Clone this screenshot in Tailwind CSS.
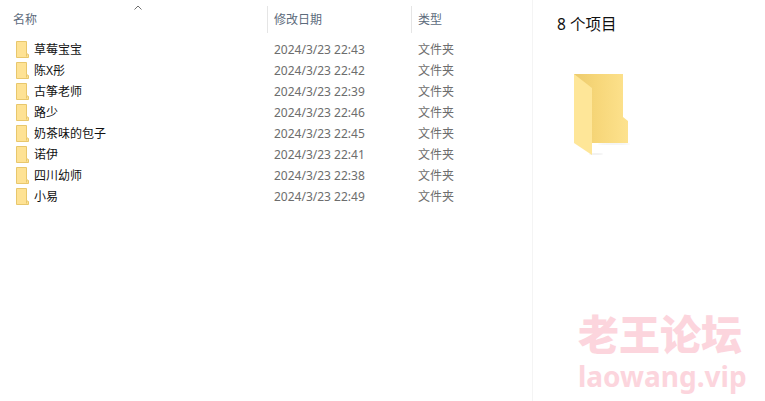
<!DOCTYPE html>
<html lang="zh-CN">
<head>
<meta charset="UTF-8">
<title>8 个项目</title>
<script src="https://cdn.jsdelivr.net/npm/@tailwindcss/browser@4"></script>
</head>
<body class="bg-white w-[765px] h-[401px] overflow-hidden relative flex font-['Noto_Sans','Noto_Sans_CJK_SC',sans-serif] text-[12px]">
<svg width="0" height="0" class="absolute">
  <defs>
    <symbol id="small-folder" viewBox="0 0 13 17">
      <path d="M0.5 0.5H10.5V12.5L12.5 13.5V16.5H0.5Z" fill="#fee294" stroke="#e8c76c" stroke-width="1"/>
      <path d="M10.5 12.5V15.5" stroke="#e8c76c" fill="none"/>
    </symbol>
  </defs>
</svg>
<main class="w-[533px] shrink-0 border-r border-[#f4f4f4] h-full">
  <div class="relative grid grid-cols-[267px_144px_120px] h-[34px] pt-[6px] text-[#5d6b7c]">
    <div class="flex items-center pl-[13px] h-[27px]">名称</div>
    <div class="flex items-center pl-[6px] h-[27px] border-l border-[#e5e5e5]">修改日期</div>
    <div class="flex items-center pl-[6px] h-[27px] border-l border-[#e5e5e5]">类型</div>
    <svg class="absolute left-[134px] top-[5px]" width="8" height="5" viewBox="0 0 8 5"><path d="M0.5 4.5L4 1L7.5 4.5" fill="none" stroke="#6f6f6f"/></svg>
  </div>
  <ul class="mt-[5px]">
    <li class="grid grid-cols-[267px_144px_120px] h-[21px] items-center"><div class="flex items-center gap-[5px] pl-[16px] text-[#111]"><svg class="w-[13px] h-[17px]"><use href="#small-folder"/></svg>草莓宝宝</div><div class="pl-[7px] text-[#6d6d6d]">2024/3/23 22:43</div><div class="pl-[7px] text-[#6d6d6d]">文件夹</div></li>
    <li class="grid grid-cols-[267px_144px_120px] h-[21px] items-center"><div class="flex items-center gap-[5px] pl-[16px] text-[#111]"><svg class="w-[13px] h-[17px]"><use href="#small-folder"/></svg>陈X彤</div><div class="pl-[7px] text-[#6d6d6d]">2024/3/23 22:42</div><div class="pl-[7px] text-[#6d6d6d]">文件夹</div></li>
    <li class="grid grid-cols-[267px_144px_120px] h-[21px] items-center"><div class="flex items-center gap-[5px] pl-[16px] text-[#111]"><svg class="w-[13px] h-[17px]"><use href="#small-folder"/></svg>古筝老师</div><div class="pl-[7px] text-[#6d6d6d]">2024/3/23 22:39</div><div class="pl-[7px] text-[#6d6d6d]">文件夹</div></li>
    <li class="grid grid-cols-[267px_144px_120px] h-[21px] items-center"><div class="flex items-center gap-[5px] pl-[16px] text-[#111]"><svg class="w-[13px] h-[17px]"><use href="#small-folder"/></svg>路少</div><div class="pl-[7px] text-[#6d6d6d]">2024/3/23 22:46</div><div class="pl-[7px] text-[#6d6d6d]">文件夹</div></li>
    <li class="grid grid-cols-[267px_144px_120px] h-[21px] items-center"><div class="flex items-center gap-[5px] pl-[16px] text-[#111]"><svg class="w-[13px] h-[17px]"><use href="#small-folder"/></svg>奶茶味的包子</div><div class="pl-[7px] text-[#6d6d6d]">2024/3/23 22:45</div><div class="pl-[7px] text-[#6d6d6d]">文件夹</div></li>
    <li class="grid grid-cols-[267px_144px_120px] h-[21px] items-center"><div class="flex items-center gap-[5px] pl-[16px] text-[#111]"><svg class="w-[13px] h-[17px]"><use href="#small-folder"/></svg>诺伊</div><div class="pl-[7px] text-[#6d6d6d]">2024/3/23 22:41</div><div class="pl-[7px] text-[#6d6d6d]">文件夹</div></li>
    <li class="grid grid-cols-[267px_144px_120px] h-[21px] items-center"><div class="flex items-center gap-[5px] pl-[16px] text-[#111]"><svg class="w-[13px] h-[17px]"><use href="#small-folder"/></svg>四川幼师</div><div class="pl-[7px] text-[#6d6d6d]">2024/3/23 22:38</div><div class="pl-[7px] text-[#6d6d6d]">文件夹</div></li>
    <li class="grid grid-cols-[267px_144px_120px] h-[21px] items-center"><div class="flex items-center gap-[5px] pl-[16px] text-[#111]"><svg class="w-[13px] h-[17px]"><use href="#small-folder"/></svg>小易</div><div class="pl-[7px] text-[#6d6d6d]">2024/3/23 22:49</div><div class="pl-[7px] text-[#6d6d6d]">文件夹</div></li>
  </ul>
</main>
<aside class="flex-1 pl-[24px] pt-[13px]">
  <div class="text-[15.5px] leading-[22px] text-[#111]">8 个项目</div>
  <svg class="mt-[39px] ml-[17px]" width="56" height="82" viewBox="0 0 56 82">
    <defs>
      <linearGradient id="back" x1="0" x2="1" y1="0" y2="0">
        <stop offset="0" stop-color="#eccb6e"/>
        <stop offset="0.4" stop-color="#f6d678"/>
        <stop offset="1" stop-color="#fde28e"/>
      </linearGradient>
    </defs>
    <ellipse cx="22" cy="80" rx="7" ry="1" fill="#f2f2f2"/>
    <ellipse cx="40" cy="70" rx="16" ry="1" fill="#f5f5f5"/>
    <path d="M0 0H49V43L54 47V69H18V60H0Z" fill="url(#back)"/>
    <path d="M0 0L18 14V81L0 69Z" fill="#fee698"/>
  </svg>
</aside>
<div class="absolute left-[578px] top-[308px] flex flex-col gap-[3px]">
  <span class="text-[41px] leading-[48px] font-black text-[#fcd5dd] font-['Noto_Sans_CJK_SC',sans-serif]">老王论坛</span>
  <span class="text-[28px] leading-[34px] font-bold text-[#fcd5dd] font-['Noto_Sans',sans-serif]">laowang.vip</span>
</div>
</body>
</html>
